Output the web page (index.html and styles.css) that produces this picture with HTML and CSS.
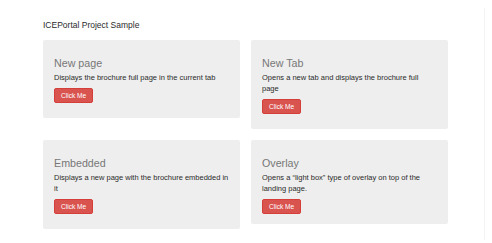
FILE: index.html
```html
<!DOCTYPE html>
<html>

<head>
  <title>ICEPortal Project Sample</title>
  <link rel="stylesheet" href="styles.css">
</head>

<body>
  <div class="page">
    <h1 class="title">ICEPortal Project Sample</h1>

    <div class="grid">
      <div class="well">
        <h3>New page</h3>
        <p>Displays the brochure full page in the current tab</p>
        <button class="btn">Click Me</button>
      </div>

      <div class="well">
        <h3>New Tab</h3>
        <p>Opens a new tab and displays the brochure full page</p>
        <button class="btn">Click Me</button>
      </div>

      <div class="well">
        <h3>Embedded</h3>
        <p>Displays a new page with the brochure embedded in it</p>
        <button class="btn">Click Me</button>
      </div>

      <div class="well well-short">
        <h3>Overlay</h3>
        <p>Opens a &ldquo;light box&rdquo; type of overlay on top of the landing page.</p>
        <button class="btn">Click Me</button>
      </div>
    </div>
  </div>
</body>

</html>
```

FILE: styles.css
```css
body {
  font-family: "Liberation Sans", Arial, sans-serif;
  margin: 0;
  color: #2b2b2b;
  background: #ffffff;
}

.page {
  width: 485px;
  height: 232px;
  margin-top: 8px;
  padding: 11px 0 0 43px;
  box-sizing: border-box;
  border-right: 1px solid #f4f4f4;
}

.title {
  font-size: 8.5px;
  font-weight: normal;
  line-height: 12px;
  margin: 0 0 9px;
}

.grid {
  display: grid;
  grid-template-columns: 197px 197px;
  column-gap: 11px;
  row-gap: 11px;
  align-items: start;
}

.well {
  background: #eeeeee;
  border-radius: 2px;
  padding: 17px 11px 15px;
}

.well-short {
  padding-bottom: 10px;
}

.well h3 {
  font-size: 10.7px;
  font-weight: normal;
  line-height: 13px;
  color: #777777;
  margin: 0 0 2px;
}

.well p {
  font-size: 7.5px;
  line-height: 11px;
  margin: 0 0 5px;
}

.btn {
  display: block;
  font-family: inherit;
  font-size: 6.6px;
  line-height: 13px;
  height: 15px;
  padding: 0 6px;
  color: #ffffff;
  background: #d9534f;
  border: 1px solid #d43f3a;
  border-radius: 2px;
}
```
